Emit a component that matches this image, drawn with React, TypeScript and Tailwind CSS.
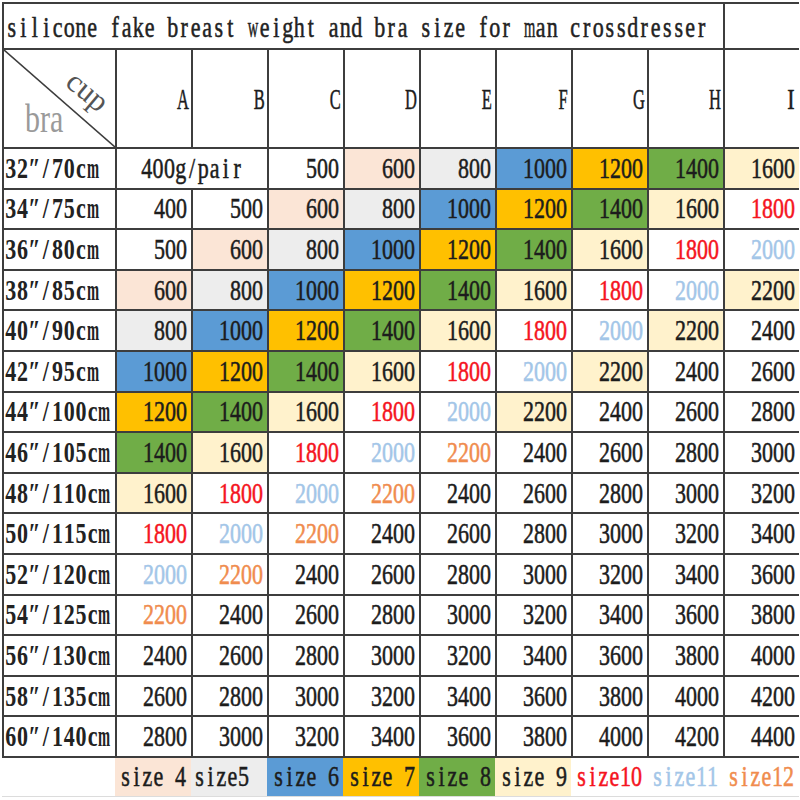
import React from 'react';

// weights by diagonal index: 400, 500, 600, 800, 1000 ... +200
const weightAt = (k: number) => (k === 0 ? 400 : k === 1 ? 500 : k === 2 ? 600 : 800 + 200 * (k - 3));

const CUPS = ['A', 'B', 'C', 'D', 'E', 'F', 'G', 'H', 'I'];

function cellTone(value: number, row: number): string {
  switch (value) {
    case 600:
      return 'bg-[#fbe5d6] text-[#1c1c1c]';
    case 800:
      return 'bg-[#ededed] text-[#1c1c1c]';
    case 1000:
      return 'bg-[#5b9bd5] text-[#1c1c1c]';
    case 1200:
      return 'bg-[#ffc000] text-[#1c1c1c]';
    case 1400:
      return 'bg-[#70ad47] text-[#1c1c1c]';
    case 1600:
      return 'bg-[#fff2cc] text-[#1c1c1c]';
    case 1800:
      return 'bg-white text-[#f5141e]';
    case 2000:
      return 'bg-white text-[#a3c6e8]';
    case 2200:
      return row <= 6 ? 'bg-[#fff2cc] text-[#1c1c1c]' : 'bg-white text-[#f08c4e]';
    default:
      return 'bg-white text-[#1c1c1c]';
  }
}

// fixed-pitch text, each glyph centred in its own slot (like the SimSun latin in the sheet)
function Mono({ text, cw }: { text: string; cw: string }) {
  return (
    <span className="inline-flex shrink-0 scale-y-[1.3]">
      {Array.from(text).map((ch, i) => {
        let squeeze = 'inline-block';
        if (ch === 'm' || ch === 'w') squeeze = 'inline-block scale-x-[0.66]';
        else if (/[A-HJ-Z]/.test(ch)) squeeze = 'inline-block scale-x-[0.75]';
        return (
          <span key={i} className={`inline-flex shrink-0 justify-center ${cw}`}>
            <span className={squeeze}>{ch === ' ' ? '\u00a0' : ch}</span>
          </span>
        );
      })}
    </span>
  );
}

const LEGEND = [
  { label: 'size 4', tone: 'bg-[#fbe5d6] text-[#1c1c1c] justify-end pr-[5px]' },
  { label: 'size5', tone: 'bg-[#ededed] text-[#1c1c1c] justify-start pl-[3px]' },
  { label: 'size 6', tone: 'bg-[#5b9bd5] text-[#1c1c1c] justify-end pr-[4px]' },
  { label: 'size 7', tone: 'bg-[#ffc000] text-[#1c1c1c] justify-end pr-[4px]' },
  { label: 'size 8', tone: 'bg-[#70ad47] text-[#1c1c1c] justify-end pr-[4px]' },
  { label: 'size 9', tone: 'bg-[#fff2cc] text-[#1c1c1c] justify-end pr-[4px]' },
  { label: 'size10', tone: 'bg-white text-[#f5141e] justify-end pr-[5px]' },
  { label: 'size11', tone: 'bg-white text-[#a3c6e8] justify-end pr-[5px]' },
  { label: 'size12', tone: 'bg-white text-[#f08c4e] justify-end pr-[5px]' },
];

export default function App() {
  const rows = Array.from({ length: 15 }, (_, i) => ({
    label: `${32 + 2 * i}″/${70 + 5 * i}cm`,
    index: i,
  }));

  return (
    <div className="w-[800px] h-[800px] overflow-hidden bg-white pt-[2px] pl-[2px] font-['Liberation_Serif','DejaVu_Serif',serif] text-[22px] leading-none text-[#1c1c1c] [-webkit-text-stroke:0.4px]">
      {/* bordered sheet */}
      <div className="grid w-[797px] grid-cols-[111px_repeat(9,74px)] grid-rows-[44px_97px_repeat(15,38.6px)] gap-[2px] bg-[#3d3d3d] p-[2px]">
        {/* title */}
        <div className="col-span-9 flex items-center bg-white pl-[2px] pt-[3px] text-[#222]">
          <Mono text="silicone fake breast weight and bra size for man crossdresser" cw="w-[11.5px]" />
        </div>
        <div className="bg-white" />

        {/* header */}
        <div className="relative bg-white">
          <svg className="absolute inset-0 h-full w-full" viewBox="0 0 111 97" preserveAspectRatio="none">
            <line x1="0" y1="0" x2="111" y2="97" stroke="#3d3d3d" strokeWidth="1.6" />
          </svg>
          <span className="absolute left-[84px] top-[41px] -translate-x-1/2 -translate-y-1/2 rotate-[40deg] text-[31px] text-[#555] [-webkit-text-stroke:0px]">
            cup
          </span>
          <span className="absolute left-[21px] top-[54px] inline-block scale-y-[1.3] text-[30px] text-[#9a9a9a] [-webkit-text-stroke:0px]">
            bra
          </span>
        </div>
        {CUPS.map((c) => (
          <div key={c} className="flex items-center justify-end bg-white pr-[2px] pt-[2px]">
            <Mono text={c} cw="w-[12px]" />
          </div>
        ))}

        {/* data rows */}
        {rows.map((r) => (
          <React.Fragment key={r.index}>
            <div className="flex items-center bg-white pl-[1px] pt-[1px] font-bold text-[#222] [-webkit-text-stroke:0px]">
              <Mono text={r.label} cw="w-[11.7px]" />
            </div>
            {r.index === 0 && (
              <div className="col-span-2 flex items-center justify-center bg-white pt-[1px]">
                <Mono text="400g/pair" cw="w-[11.3px]" />
              </div>
            )}
            {CUPS.map((c, j) => {
              if (r.index === 0 && j < 2) return null;
              const v = weightAt(r.index + j - 1);
              return (
                <div key={c} className={`flex items-center justify-end pr-[4px] pt-[1px] ${cellTone(v, r.index)}`}>
                  <span className="inline-block scale-y-[1.3]">{v}</span>
                </div>
              );
            })}
          </React.Fragment>
        ))}
      </div>

      {/* colour key under the sheet */}
      <div className="grid h-[39px] w-[797px] grid-cols-[113px_repeat(9,76px)] border-b border-[#dcdcdc]">
        <div className="bg-white" />
        {LEGEND.map((l) => (
          <div key={l.label} className={`flex items-center pt-[1px] ${l.tone}`}>
            <Mono text={l.label} cw="w-[11px]" />
          </div>
        ))}
      </div>
    </div>
  );
}
